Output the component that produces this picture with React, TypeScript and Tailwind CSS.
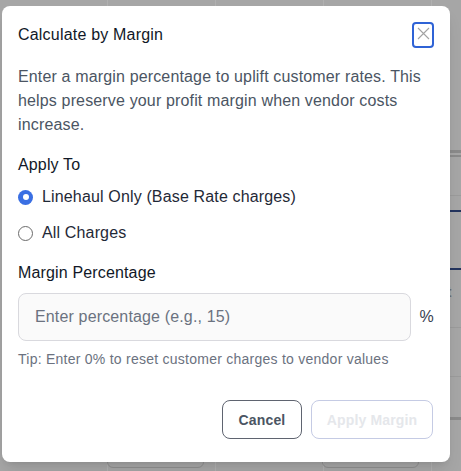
import { useState } from 'react';

const cols = [0, 1, 2, 3, 4];

export default function App() {
  const [applyTo, setApplyTo] = useState<'linehaul' | 'all'>('linehaul');
  const [pct, setPct] = useState('');

  return (
    <div
      className="relative w-[461px] h-[471px] overflow-hidden bg-[#a6a6a6]"
      style={{ fontFamily: '"Liberation Sans", Arial, sans-serif' }}
    >
      {/* page behind the overlay */}
      <div className="flex h-full">
        {cols.map((c) => (
          <div key={c} className="w-[108px] shrink-0 border-r border-[#b0b0b0] h-full" />
        ))}
      </div>
      <div className="absolute right-0 top-[150px] w-[20px] flex flex-col">
        <div className="h-[3px] bg-[#8a8a8a]" />
        <div className="h-[2px] mt-[2px] bg-[#8a8a8a]" />
        <div className="h-[1px] mt-[38px] bg-[#9b9b9b]" />
        <div className="h-[2px] mt-[14px] bg-[#23345e]" />
        <div className="h-[2px] mt-[56px] bg-[#23345e]" />
        <div className="mt-[12px] text-[14px] font-bold text-[#6b6b6b] -ml-[2px]">st</div>
        <div className="h-[1px] mt-[24px] bg-[#9b9b9b]" />
        <div className="h-[1px] mt-[48px] bg-[#9b9b9b]" />
        <div className="h-[3px] mt-[40px] bg-[#8a8a8a]" />
      </div>
      <div className="absolute left-0 bottom-0 w-full h-[30px] flex items-end text-[14px] text-[#6b6b6b]">
        <div className="w-[101px] pb-[6px] pr-[6px] text-right">$21.82</div>
        <div className="w-[97px] h-[28px] ml-[6px] mb-[3px] border border-[#8f8f8f] rounded-md text-right pr-[6px] pt-[4px]">22.0000</div>
        <div className="w-[100px] ml-[12px] pb-[6px] flex justify-between pr-[8px]">
          <span>Flat</span>
          <span className="text-[10px]">⌄</span>
        </div>
        <div className="w-[97px] h-[28px] ml-[6px] mb-[3px] border border-[#8f8f8f] rounded-md text-right pr-[6px] pt-[4px]">1.0000</div>
      </div>

      {/* dialog */}
      <div className="absolute left-[2px] top-[6px] w-[448px] h-[456px] bg-white rounded-lg shadow-lg px-4 pt-[17px] pb-[23px] flex flex-col tracking-[0.15px]">
        <div className="flex justify-between items-start">
          <h2 className="text-base leading-6 font-medium text-[#111827] tracking-[0.2px]">Calculate by Margin</h2>
          <button className="w-[22px] h-[26px] -mt-[1px] border-2 border-[#2f63d6] rounded flex items-center justify-center">
            <svg width="13" height="13" viewBox="0 0 13 13" className="-mt-[3px]">
              <path d="M1 1L12 12M12 1L1 12" stroke="#a3a3a3" strokeWidth="1.1" />
            </svg>
          </button>
        </div>

        <p className="mt-[17px] text-base leading-6 text-[#4b5563]">
          Enter a margin percentage to uplift customer rates. This helps preserve your profit margin when vendor costs increase.
        </p>

        <div className="mt-4 text-base leading-6 font-medium text-[#111827]">Apply To</div>

        <div className="mt-2 flex flex-col gap-3">
          {[
            { id: 'linehaul' as const, label: 'Linehaul Only (Base Rate charges)' },
            { id: 'all' as const, label: 'All Charges' },
          ].map((opt) => (
            <label key={opt.id} className="flex items-center gap-[9px] h-6 cursor-pointer">
              <span
                onClick={() => setApplyTo(opt.id)}
                className={
                  applyTo === opt.id
                    ? 'w-[15px] h-[15px] rounded-full bg-[#3a6fe3] flex items-center justify-center'
                    : 'w-[15px] h-[15px] rounded-full border border-[#6b6b6b] bg-white'
                }
              >
                {applyTo === opt.id && <span className="w-[6px] h-[6px] rounded-full bg-white" />}
              </span>
              <span className="text-base text-[#1f2937]">{opt.label}</span>
            </label>
          ))}
        </div>

        <div className="mt-4 text-base leading-6 font-medium text-[#111827]">Margin Percentage</div>

        <div className="mt-2 flex items-center gap-[9px]">
          <input
            value={pct}
            onChange={(e) => setPct(e.target.value)}
            placeholder="Enter percentage (e.g., 15)"
            className="w-[393px] h-12 px-4 rounded-lg border border-[#d9d9de] bg-[#fafafa] text-base text-[#111827] placeholder:text-[#6b7280] outline-none tracking-[0.15px]"
          />
          <span className="text-base text-[#374151]">%</span>
        </div>

        <p className="mt-2 text-sm leading-5 text-[#6b7280] tracking-[0.25px]">Tip: Enter 0% to reset customer charges to vendor values</p>

        <div className="mt-auto flex justify-end gap-[9px] pr-[1px]">
          <button className="w-[80px] h-[39px] rounded-lg border border-[#5f6470] text-sm font-semibold text-[#4b5563]">
            Cancel
          </button>
          <button
            disabled
            className="w-[122px] h-[39px] rounded-lg border border-[#c5cbe4] text-sm font-semibold text-[#e5e7eb]"
          >
            Apply Margin
          </button>
        </div>
      </div>
    </div>
  );
}
